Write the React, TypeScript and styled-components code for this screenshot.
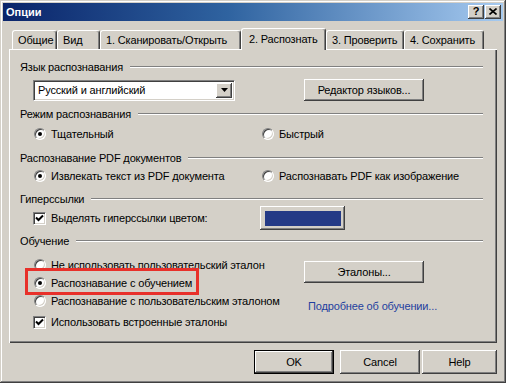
import { FC, ReactNode } from "react";
import styled, { createGlobalStyle } from "styled-components";

const GlobalStyle = createGlobalStyle`
  html, body {
    margin: 0;
    padding: 0;
    background: #d4d0c8;
  }
  body {
    font-family: "Liberation Sans", Arial, sans-serif;
    font-size: 11px;
    letter-spacing: -0.15px;
    color: #000;
  }
`;

const raised = `
  box-shadow: inset -1px -1px #404040, inset 1px 1px #ffffff,
    inset -2px -2px #808080, inset 2px 2px #d4d0c8;
`;

const Window = styled.div`
  box-sizing: border-box;
  width: 506px;
  height: 383px;
  padding: 3px;
  background: #d4d0c8;
  box-shadow: inset -1px -1px #404040, inset 1px 1px #d4d0c8,
    inset -2px -2px #808080, inset 2px 2px #ffffff;
  display: flex;
  flex-direction: column;
`;

const TitleBar = styled.div`
  height: 18px;
  display: flex;
  align-items: center;
  padding: 0 2px 0 2px;
  background: linear-gradient(to right, #0a246a 0%, #2f63a0 45%, #a6caf0 100%);
`;

const Title = styled.div`
  color: #fff;
  font-weight: bold;
  font-size: 11px;
  letter-spacing: 0;
  margin-left: 1px;
`;

const TitleButtons = styled.div`
  margin-left: auto;
  display: flex;
  gap: 1px;
`;

const TitleButton = styled.div`
  box-sizing: border-box;
  width: 16px;
  height: 14px;
  background: #d4d0c8;
  ${raised};
  display: flex;
  align-items: center;
  justify-content: center;
  font-weight: bold;
  font-size: 11px;
  line-height: 1;
  padding-bottom: 1px;
`;

const Body = styled.div`
  padding: 7px 6px 0 6px;
  display: flex;
  flex-direction: column;
`;

const Tabs = styled.div`
  display: flex;
  align-items: flex-end;
  height: 21px;
  padding-left: 3px;
  position: relative;
  z-index: 1;
`;

const Tab = styled.div<{ $w: number; $active?: boolean }>`
  box-sizing: border-box;
  width: ${(p) => p.$w}px;
  height: ${(p) => (p.$active ? 22 : 19)}px;
  margin-bottom: ${(p) => (p.$active ? -1 : 0)}px;
  padding: ${(p) => (p.$active ? "3px 0 0 7px" : "2px 0 0 5px")};
  background: #d4d0c8;
  border-radius: 3px 3px 0 0;
  border-left: 1px solid #ffffff;
  border-top: 1px solid #ffffff;
  border-right: 1px solid #404040;
  box-shadow: inset -1px 0 #808080;
  white-space: nowrap;
  line-height: 14px;
`;

const Panel = styled.div`
  box-sizing: border-box;
  height: 294px;
  padding: 0 14px 0 11px;
  background: #d4d0c8;
  box-shadow: inset 1px 1px #ffffff, inset -1px -1px #404040,
    inset -2px -2px #808080;
  display: flex;
  flex-direction: column;
`;

const GroupHeader = styled.div<{ $mt: number }>`
  display: flex;
  align-items: center;
  height: 13px;
  margin-top: ${(p) => p.$mt}px;
  white-space: nowrap;

  &::after {
    content: "";
    flex: 1;
    margin-left: 7px;
    border-top: 1px solid #808080;
    border-bottom: 1px solid #ffffff;
  }
`;

const Row = styled.div<{ $mt: number; $h: number }>`
  display: grid;
  grid-template-columns: 241px 1fr;
  align-items: center;
  height: ${(p) => p.$h}px;
  margin-top: ${(p) => p.$mt}px;
`;

const Option = styled.div<{ $h?: number; $mt?: number; $indent?: number; $highlight?: boolean }>`
  position: relative;
  display: flex;
  align-items: center;
  gap: 5px;
  padding-left: ${(p) => p.$indent ?? 13}px;
  height: ${(p) => p.$h ?? 13}px;
  margin-top: ${(p) => p.$mt ?? 0}px;
  white-space: nowrap;

  &::after {
    content: "";
    display: ${(p) => (p.$highlight ? "block" : "none")};
    position: absolute;
    left: 5px;
    top: -6px;
    width: 174px;
    height: 27px;
    box-sizing: border-box;
    border: 3px solid #e8302a;
  }
`;

const RadioCircle = styled.span<{ $checked?: boolean }>`
  position: relative;
  box-sizing: border-box;
  width: 12px;
  height: 12px;
  margin-left: 1px;
  border-radius: 50%;
  background: #fff;
  border: 1px solid;
  border-color: #808080 #ffffff #ffffff #808080;
  box-shadow: inset 1px 1px #404040, inset -1px -1px #d4d0c8;
  flex-shrink: 0;

  &::after {
    content: "";
    display: ${(p) => (p.$checked ? "block" : "none")};
    position: absolute;
    left: 3px;
    top: 3px;
    width: 4px;
    height: 4px;
    border-radius: 50%;
    background: #000;
  }
`;

const CheckBox = styled.span`
  box-sizing: border-box;
  width: 13px;
  height: 13px;
  background: #fff;
  border: 1px solid;
  border-color: #808080 #ffffff #ffffff #808080;
  box-shadow: inset 1px 1px #404040, inset -1px -1px #d4d0c8;
  display: flex;
  align-items: center;
  justify-content: center;
  flex-shrink: 0;
`;

const Combo = styled.div`
  box-sizing: border-box;
  width: 202px;
  height: 21px;
  margin-left: 13px;
  background: #fff;
  border: 1px solid;
  border-color: #808080 #ffffff #ffffff #808080;
  box-shadow: inset 1px 1px #404040, inset -1px -1px #d4d0c8;
  display: flex;
  align-items: center;
  padding: 2px 2px 2px 4px;
`;

const ComboText = styled.div`
  flex: 1;
`;

const ComboArrow = styled.div`
  box-sizing: border-box;
  width: 16px;
  height: 100%;
  background: #d4d0c8;
  ${raised};
  display: flex;
  align-items: center;
  justify-content: center;
`;

const Button = styled.div<{ $w: number; $h?: number; $ml?: number; $mt?: number; $default?: boolean }>`
  box-sizing: border-box;
  width: ${(p) => p.$w}px;
  height: ${(p) => p.$h ?? 22}px;
  margin-left: ${(p) => p.$ml ?? 0}px;
  margin-top: ${(p) => p.$mt ?? 0}px;
  background: #d4d0c8;
  ${raised};
  border: ${(p) => (p.$default ? "1px solid #000" : "none")};
  display: flex;
  align-items: center;
  justify-content: center;
  white-space: nowrap;
`;

const Swatch = styled.div`
  width: 76px;
  height: 15px;
  background: #243a86;
`;

const Training = styled.div`
  display: grid;
  grid-template-columns: 284px 1fr;
  margin-top: 9px;
`;

const Column = styled.div`
  display: flex;
  flex-direction: column;
`;

const Link = styled.div`
  margin-top: 17px;
  margin-left: 4px;
  color: #1f3f9f;
  white-space: nowrap;
`;

const Footer = styled.div`
  display: flex;
  justify-content: flex-end;
  margin-top: 7px;
`;

const Radio: FC<{ checked?: boolean; children: ReactNode }> = ({ checked, children }) => (
  <>
    <RadioCircle $checked={checked} />
    <span>{children}</span>
  </>
);

const Check: FC<{ children: ReactNode }> = ({ children }) => (
  <>
    <CheckBox>
      <svg width="9" height="9" viewBox="0 0 9 9">
        <path d="M1 3.5 L3.5 6 L8 1.5" fill="none" stroke="#000" strokeWidth="2" />
      </svg>
    </CheckBox>
    <span>{children}</span>
  </>
);

export default function App() {
  return (
    <>
      <GlobalStyle />
      <Window>
        <TitleBar>
          <Title>Опции</Title>
          <TitleButtons>
            <TitleButton>?</TitleButton>
            <TitleButton>
              <svg width="8" height="7" viewBox="0 0 8 7">
                <path d="M0.5 0.5 L7.5 6.5 M7.5 0.5 L0.5 6.5" stroke="#000" strokeWidth="1.6" />
              </svg>
            </TitleButton>
          </TitleButtons>
        </TitleBar>
        <Body>
          <Tabs>
            <Tab $w={45}>Общие</Tab>
            <Tab $w={43}>Вид</Tab>
            <Tab $w={141}>1. Сканировать/Открыть</Tab>
            <Tab $w={85} $active>2. Распознать</Tab>
            <Tab $w={78}>3. Проверить</Tab>
            <Tab $w={80}>4. Сохранить</Tab>
          </Tabs>
          <Panel>
            <GroupHeader $mt={11}>Язык распознавания</GroupHeader>
            <Row $mt={6} $h={22}>
              <Combo>
                <ComboText>Русский и английский</ComboText>
                <ComboArrow>
                  <svg width="7" height="4" viewBox="0 0 7 4">
                    <path d="M0 0 H7 L3.5 4 Z" fill="#000" />
                  </svg>
                </ComboArrow>
              </Combo>
              <Button $w={120} $ml={43}>Редактор языков...</Button>
            </Row>

            <GroupHeader $mt={6}>Режим распознавания</GroupHeader>
            <Row $mt={7} $h={13}>
              <Option>
                <Radio checked>Тщательный</Radio>
              </Option>
              <Option $indent={0}>
                <Radio>Быстрый</Radio>
              </Option>
            </Row>

            <GroupHeader $mt={11}>Распознавание PDF документов</GroupHeader>
            <Row $mt={5} $h={13}>
              <Option>
                <Radio checked>Извлекать текст из PDF документа</Radio>
              </Option>
              <Option $indent={0}>
                <Radio>Распознавать PDF как изображение</Radio>
              </Option>
            </Row>

            <GroupHeader $mt={10}>Гиперссылки</GroupHeader>
            <Row $mt={1} $h={24}>
              <Option>
                <Check>Выделять гиперссылки цветом:</Check>
              </Option>
              <Button $w={85} $h={24} $ml={-1}>
                <Swatch />
              </Button>
            </Row>

            <GroupHeader $mt={4}>Обучение</GroupHeader>
            <Training>
              <Column>
                <Option $h={18}>
                  <Radio>Не использовать пользовательский эталон</Radio>
                </Option>
                <Option $h={18} $highlight>
                  <Radio checked>Распознавание с обучением</Radio>
                </Option>
                <Option $h={18}>
                  <Radio>Распознавание с пользовательским эталоном</Radio>
                </Option>
                <Option $h={18} $mt={3}>
                  <Check>Использовать встроенные эталоны</Check>
                </Option>
              </Column>
              <Column>
                <Button $w={120} $mt={5}>Эталоны...</Button>
                <Link>Подробнее об обучении...</Link>
              </Column>
            </Training>
          </Panel>
          <Footer>
            <Button $w={80} $h={24} $default>OK</Button>
            <Button $w={80} $h={24} $ml={6}>Cancel</Button>
            <Button $w={75} $h={24} $ml={2}>Help</Button>
          </Footer>
        </Body>
      </Window>
    </>
  );
}
